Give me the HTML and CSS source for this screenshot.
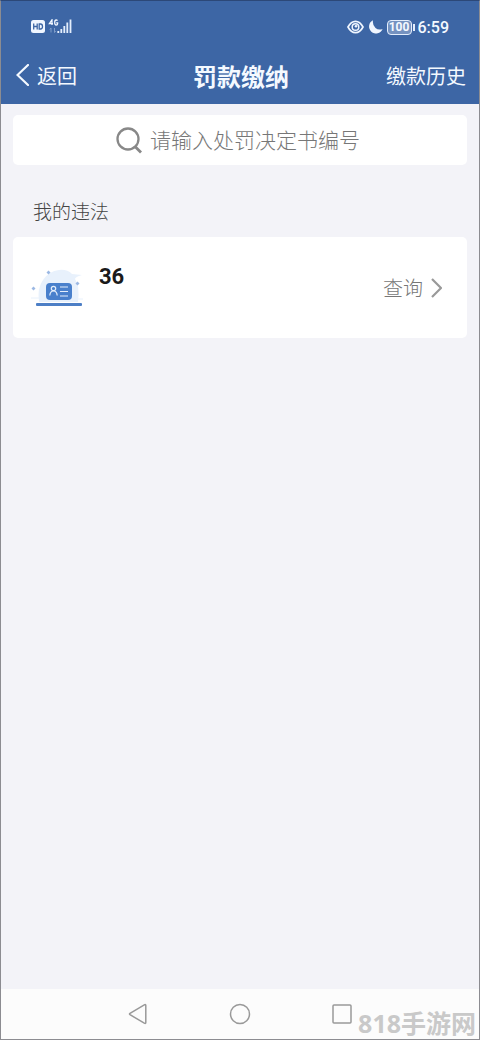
FILE: index.html
```html
<!DOCTYPE html>
<html lang="zh-CN">
<head>
<meta charset="utf-8">
<meta name="viewport" content="width=device-width, initial-scale=1">
<title>罚款缴纳</title>
<link rel="stylesheet" href="styles.css">
</head>
<body>
<div class="app">
  <header class="header">
    <div class="status">
      <div class="status-left">
        <svg width="42" height="16" viewBox="0 0 42 16" aria-hidden="true">
          <rect x="0" y="1" width="14" height="13" rx="2.5" fill="#f0f6ff"/>
          <path d="M2.7 4.500v6M6.200 4.500v6M2.700 7.500h3.500M8.200 5h1.300q2 0 2 2.500t-2 2.500H8.200z" fill="none" stroke="#3d66a5" stroke-width="1.300"/>
          <path d="M21 6V.8L18.400 4.600H22M26.500 1.700Q26 1 25.200 1q-1.500 0-1.500 2.500T25.200 6q1.400 0 1.400-1.200V3.800H25.200" fill="none" stroke="#f0f6ff" stroke-width="1.300"/>
          <path d="M20 9v4.500M18.800 10.500L20 9M23.500 9v4.500M24.700 12l-1.200 1.500" fill="none" stroke="#7f9dca" stroke-width="1"/>
          <path d="M27.300 14v-2M30.300 14v-4M33.300 14V7M36.300 14V3.500M39.500 14V0.500" stroke="#e4eefc" stroke-width="1.800"/>
        </svg>
      </div>
      <div class="status-right">
        <svg width="17" height="14" viewBox="0 0 17 14" fill="none" stroke="#f0f6ff" aria-hidden="true">
          <path d="M1 7Q4 1.300 8.500 1.300T16 7Q13 12.700 8.500 12.700T1 7z" stroke-width="1.700"/>
          <circle cx="8.500" cy="7" r="3.300" stroke-width="1.500"/>
          <circle cx="9" cy="6.300" r="1.300" fill="#f0f6ff" stroke="none"/>
        </svg>
        <svg width="15" height="14" viewBox="0 0 15 14" aria-hidden="true">
          <path d="M5 .2A7 7 0 1 0 14.600 9Q10.500 10.500 7.500 8 4.200 5 5 .2z" fill="#f0f6ff"/>
        </svg>
        <span class="battery">100</span>
        <span class="time">6:59</span>
      </div>
    </div>
    <nav class="bar">
      <button class="back" type="button">
        <svg width="13" height="22" viewBox="0 0 13 22" fill="none" stroke="currentColor" stroke-width="2.200" stroke-linecap="round" aria-hidden="true"><path d="M12 1L1.500 11 12 21"/></svg>
        返回
      </button>
      <h1 class="title">罚款缴纳</h1>
      <a class="history" href="#history">缴款历史</a>
    </nav>
  </header>

  <main class="main">
    <label class="search">
      <svg width="27" height="27" viewBox="0 0 27 27" fill="none" stroke="#888" aria-hidden="true">
        <circle cx="12" cy="12" r="10.500" stroke-width="2.300"/><path d="M19 19.500l6 6" stroke-width="2.800"/>
      </svg>
      <input class="search-input" type="text" aria-label="处罚决定书编号" placeholder="请输入处罚决定书编号">
    </label>

    <h2 class="section">我的违法</h2>

    <div class="card">
      <svg class="card-icon" width="54" height="44" viewBox="0 0 54 44" aria-hidden="true">
        <path d="M8 36Q6 22 12 14 18 5 28 4 36 3 41 8L51 9Q44 11 44 13 49 20 47 36z" fill="#e8f1fc"/>
        <path d="M0 32h16M40 33h12" stroke="#e8f1fc"/>
        <path d="M17.500 4.500l2 2-2 2-2-2zM46.500 15.500l2 2-2 2-2-2zM2.500 20.500l2 2-2 2-2-2z" fill="#9bb8e3"/>
        <rect x="15" y="17" width="26" height="17" rx="4" fill="#4980cc"/>
        <g fill="none" stroke="#e4eefb" stroke-width="1.200"><circle cx="22.500" cy="22.500" r="2.200"/><path d="M18.800 29.500q.4-4.500 3.700-4.500t3.700 4.500M29 21h8M29 25.500h8M29 30h8"/></g>
        <rect x="5" y="37" width="46" height="3" rx="1" fill="#4d7fc6"/>
      </svg>
      <strong class="card-name">36</strong>
      <a class="query" href="#query">查询
        <svg width="11" height="20" viewBox="0 0 11 20" fill="none" stroke="#999" stroke-width="2.200" aria-hidden="true"><path d="M1 1l9 9-9 9"/></svg>
      </a>
    </div>
  </main>

  <footer class="nav">
    <button class="key" type="button" aria-label="返回键"><svg width="22" height="22" viewBox="0 0 22 22"><path d="M3 10.300L17.300 1.800Q18.800 1 18.800 2.500V19.500Q18.800 21 17.300 20.200L3 11.700Q2 11 3 10.300z"/></svg></button>
    <button class="key" type="button" aria-label="主页"><svg width="22" height="22" viewBox="0 0 22 22"><circle cx="11" cy="11" r="9.500"/></svg></button>
    <button class="key" type="button" aria-label="最近任务"><svg width="22" height="22" viewBox="0 0 22 22"><rect x="2" y="2" width="18" height="18" rx="1"/></svg></button>
    <span class="watermark">818手游网</span>
  </footer>
</div>
</body>
</html>
```
FILE: styles.css
```css
* { box-sizing: border-box; }
body {
  margin: 0;
  background: #f3f3f8;
  font-family: Roboto, "Noto Sans CJK SC", sans-serif;
}
button {
  padding: 0;
  border: 0;
  background: none;
  font: inherit;
  color: inherit;
}
a { color: inherit; text-decoration: none; }
svg { display: block; flex: none; }

.app {
  display: flex;
  flex-direction: column;
  min-height: 100vh;
  border: 1px solid #8c8c91;
  border-top-color: #2c4878;
}
.header {
  background: #3d66a5;
  color: #f4f9ff;
}
.status {
  display: flex;
  justify-content: space-between;
  align-items: center;
  height: 52px;
  padding: 0 30px;
}
.status-right {
  display: flex;
  align-items: center;
  gap: 4px;
}
.battery {
  position: relative;
  width: 25px;
  height: 15px;
  margin-right: 2px;
  border: 1px solid #e4eefc;
  border-radius: 4px;
  background: #7592c0;
  font-size: 12px;
  font-weight: 700;
  line-height: 13px;
  text-align: center;
}
.battery::after {
  content: "";
  position: absolute;
  top: 3px;
  right: -4px;
  width: 2px;
  height: 7px;
  background: #e4eefc;
}
.time {
  font-size: 16px;
  font-weight: 500;
}
.bar {
  display: grid;
  grid-template-columns: 1fr auto 1fr;
  align-items: center;
  height: 51px;
  padding: 0 13px 7px 15px;
  font-size: 20px;
}
.back {
  display: flex;
  align-items: center;
  gap: 8px;
}
.title {
  margin: 0;
  font-size: 24px;
  font-weight: 700;
}
.history { justify-self: end; }

.main {
  flex: 1;
  padding: 11px 12px;
}
.search {
  display: flex;
  justify-content: center;
  align-items: center;
  gap: 7px;
  height: 50px;
  border-radius: 5px;
  background: #fff;
}
.search-input {
  width: 214px;
  padding: 2px 0 0;
  border: 0;
  outline: 0;
  background: none;
  color: #555;
  font: 300 21px Roboto, "Noto Sans CJK SC", sans-serif;
}
.search-input::placeholder { color: #777; }
.section {
  margin: 33px 0 9px 20px;
  color: #444;
  font-size: 19px;
  font-weight: 300;
  line-height: 30px;
}
.card {
  display: flex;
  align-items: center;
  height: 101px;
  padding: 0 25px 0 18px;
  border-radius: 5px;
  background: #fff;
}
.card-name {
  flex: 1;
  align-self: flex-start;
  margin: 25px 0 0 14px;
  color: #1a1a1a;
  font-size: 22px;
  line-height: 30px;
}
.query {
  display: flex;
  align-items: center;
  gap: 8px;
  color: #777;
  font-size: 20px;
  font-weight: 300;
}

.nav {
  position: relative;
  display: flex;
  justify-content: center;
  gap: 80px;
  height: 50px;
  padding-top: 14px;
  background: #fcfcfc;
}
.key {
  width: 22px;
  height: 22px;
}
.key svg {
  fill: none;
  stroke: #999;
  stroke-width: 1.5px;
}
.watermark {
  position: absolute;
  right: 3px;
  bottom: 0;
  color: #c9c9c9;
  font-family: "Open Sans", "Noto Sans CJK SC", sans-serif;
  font-size: 25px;
  font-weight: 700;
  line-height: 32px;
}
```
